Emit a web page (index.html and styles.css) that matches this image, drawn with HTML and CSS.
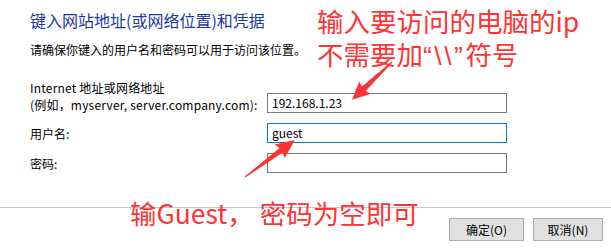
FILE: index.html
```html
<!DOCTYPE html>
<html lang="zh-CN">
<head>
<meta charset="utf-8">
<link rel="stylesheet" href="styles.css">
</head>
<body>
<div class="dialog">
  <div class="content">
    <h1 class="title">键入网站地址(或网络位置)和凭据</h1>
    <p class="desc">请确保你键入的用户名和密码可以用于访问该位置。</p>
    <div class="form">
      <div class="row row-addr">
        <div class="label label-spaced">Internet 地址或网络地址<br>(例如，myserver, server.company.com):</div>
        <div class="input">192.168.1.23</div>
      </div>
      <div class="row">
        <div class="label">用户名:</div>
        <div class="input focused">guest</div>
      </div>
      <div class="row">
        <div class="label">密码:</div>
        <div class="input"></div>
      </div>
    </div>
  </div>
  <div class="footer">
    <button class="btn btn-ok">确定(O)</button>
    <button class="btn btn-cancel">取消(N)</button>
  </div>

  <div class="note note-ip">
    <div class="note-line">输入要访问的电脑的ip</div>
    <div class="note-line">不需要加<span class="quote">“\\”</span>符号</div>
  </div>
  <div class="note note-guest"><div class="note-line">输Guest， 密码为空即可</div></div>
  <svg class="arrows" width="611" height="251" viewBox="0 0 611 251">
    <g transform="translate(392 62) rotate(136.5)">
      <polygon points="0,-0.6 39,-2.8 37,-8.5 55,0 37,8.5 39,2.8 0,0.6" fill="#ff3333"/>
    </g>
    <g transform="translate(245 177) rotate(-36.5)">
      <polygon points="0,-0.6 45,-2.8 43,-8.5 62,0 43,8.5 45,2.8 0,0.6" fill="#ff3333"/>
    </g>
  </svg>
</div>
</body>
</html>
```
FILE: styles.css
```css
html, body {
  margin: 0;
  padding: 0;
  background: #ffffff;
}
.dialog {
  position: relative;
  width: 611px;
  height: 251px;
  overflow: hidden;
  font-family: "Noto Sans CJK SC", "Noto Sans", sans-serif;
  color: #000;
}
.content {
  padding: 9px 0 0 30px;
  height: 198px;
  border-bottom: 1px solid #c8c8c8;
}
.title {
  margin: 0;
  font-size: 16px;
  font-weight: normal;
  line-height: 22px;
  color: #1a3a9c;
}
.desc {
  margin: 11px 0 0 0;
  font-size: 12px;
  line-height: 16px;
}
.form {
  margin-top: 21px;
  display: flex;
  flex-direction: column;
  gap: 10px;
}
.row {
  display: flex;
  align-items: center;
}
.row-addr {
  align-items: flex-end;
}
.label {
  width: 237px;
  font-size: 12px;
  line-height: 17px;
  white-space: nowrap;
}
.label-spaced {
  letter-spacing: 0.2px;
}
.input {
  box-sizing: border-box;
  width: 240px;
  height: 20px;
  border: 1px solid #7a7a7a;
  padding: 0 4px;
  font-size: 12px;
  line-height: 18px;
}
.input.focused {
  border-color: #0078d7;
}
.footer {
  display: flex;
  justify-content: flex-end;
  gap: 9px;
  padding: 10px 8px 0 0;
}
.btn {
  box-sizing: border-box;
  height: 23px;
  border: 1px solid #adadad;
  background: #e1e1e1;
  font-family: "Noto Sans CJK SC", "Noto Sans", sans-serif;
  font-size: 12px;
  line-height: 20px;
  padding: 0;
  color: #000;
}
.btn-ok { width: 75px; }
.btn-cancel { width: 70px; }
.note {
  position: absolute;
  color: #ff3333;
  font-size: 26.5px;
  white-space: nowrap;
}
.note-line {
  height: 33px;
  line-height: 33px;
}
.quote {
  font-family: "Liberation Sans", sans-serif;
  letter-spacing: 2.5px;
}
.note-ip {
  left: 317px;
  top: 4px;
}
.note-guest {
  left: 130px;
  top: 196px;
}
.arrows {
  position: absolute;
  left: 0;
  top: 0;
  pointer-events: none;
}
```
